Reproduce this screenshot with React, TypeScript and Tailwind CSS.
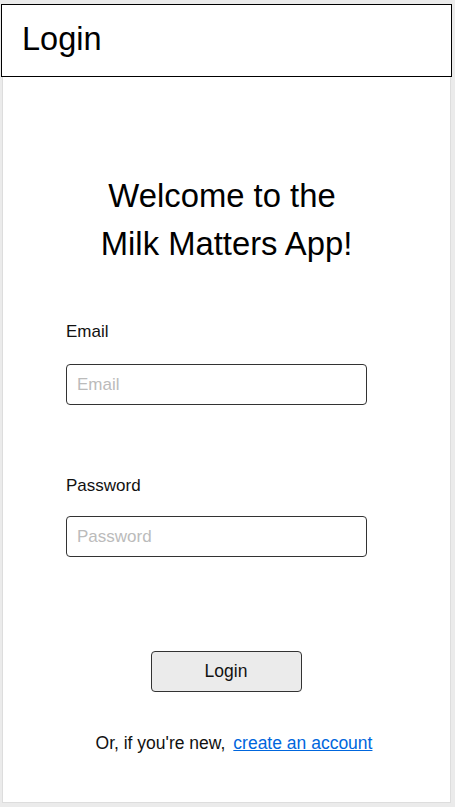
import { useState } from "react";

export default function App() {
  const [email, setEmail] = useState("");
  const [password, setPassword] = useState("");

  return (
    <div
      className="min-h-[807px] bg-[#ebebeb] pt-[4px] pl-[2px] pr-[4px] pb-[4px]"
      style={{ fontFamily: '"Liberation Sans", Arial, sans-serif' }}
    >
      <div className="flex h-[799px] flex-col border border-[#dddddd] bg-white">
        <header className="-ml-[2px] -mr-[2px] -mt-[1px] flex h-[73px] items-center border border-black bg-white pb-[2px] pl-[20px]">
          <h1 className="text-[32.5px] leading-none text-black">Login</h1>
        </header>

        <div className="mt-[95px] text-center text-[32.8px] leading-[48px] text-black">
          <div className="pr-[9px]">Welcome to the</div>
          <div>Milk Matters App!</div>
        </div>

        <form className="mt-[54px] flex flex-col">
          <div className="flex flex-col pl-[63px]">
            <label htmlFor="email" className="text-[17px] leading-5 text-[#111111]">
              Email
            </label>
            <input
              id="email"
              type="email"
              placeholder="Email"
              value={email}
              onChange={(e) => setEmail(e.target.value)}
              className="mt-[22px] h-[41px] w-[301px] rounded-[4px] border border-[#333333] px-[10px] text-[17px] text-black outline-none placeholder:text-[#bbbbbb]"
            />

            <label htmlFor="password" className="mt-[71px] text-[17px] leading-5 text-[#111111]">
              Password
            </label>
            <input
              id="password"
              type="password"
              placeholder="Password"
              value={password}
              onChange={(e) => setPassword(e.target.value)}
              className="mt-[20px] h-[41px] w-[301px] rounded-[4px] border border-[#333333] px-[10px] text-[17px] text-black outline-none placeholder:text-[#bbbbbb]"
            />
          </div>

          <div className="mt-[94px] flex justify-center">
            <button
              type="button"
              className="ml-[-1px] h-[41px] w-[151px] rounded-[4px] border border-[#333333] bg-[#ebebeb] text-[17.5px] text-[#111111]"
            >
              Login
            </button>
          </div>
        </form>

        <p className="mt-[38px] flex justify-center gap-[8px] pl-[15px] text-[17.5px] text-[#111111]">
          <span>Or, if you're new,</span>
          <a href="#" className="text-[#0066dd] underline">
            create an account
          </a>
        </p>
      </div>
    </div>
  );
}
